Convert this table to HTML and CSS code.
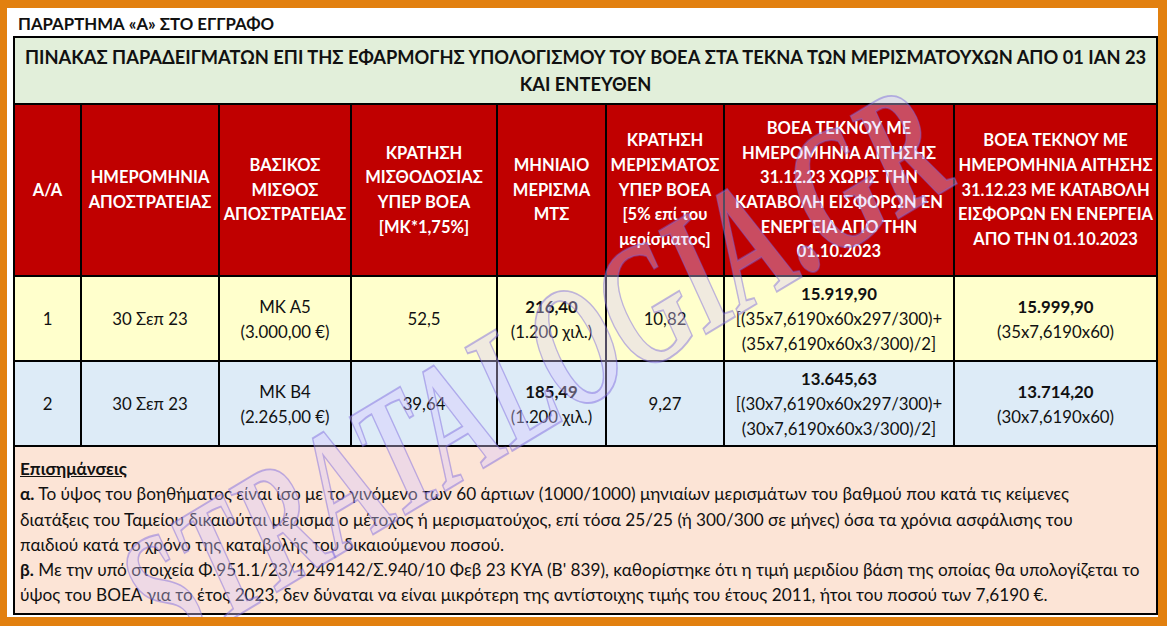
FILE: index.html
```html
<!DOCTYPE html>
<html lang="el">
<head>
<meta charset="utf-8">
<title>ΠΑΡΑΡΤΗΜΑ «Α»</title>
<link rel="stylesheet" href="styles.css">
</head>
<body>
<div class="frame">
  <div class="doc-title">ΠΑΡΑΡΤΗΜΑ «Α» ΣΤΟ ΕΓΓΡΑΦΟ</div>
  <table class="sheet">
    <colgroup>
      <col class="c1"><col class="c2"><col class="c3"><col class="c4"><col class="c5"><col class="c6"><col class="c7"><col class="c8">
    </colgroup>
    <tr class="r-title">
      <td colspan="8">ΠΙΝΑΚΑΣ ΠΑΡΑΔΕΙΓΜΑΤΩΝ ΕΠΙ ΤΗΣ ΕΦΑΡΜΟΓΗΣ ΥΠΟΛΟΓΙΣΜΟΥ ΤΟΥ ΒΟΕΑ ΣΤΑ ΤΕΚΝΑ ΤΩΝ ΜΕΡΙΣΜΑΤΟΥΧΩΝ ΑΠΟ 01 ΙΑΝ 23<br>ΚΑΙ ΕΝΤΕΥΘΕΝ</td>
    </tr>
    <tr class="r-head">
      <th>Α/Α</th>
      <th>ΗΜΕΡΟΜΗΝΙΑ<br>ΑΠΟΣΤΡΑΤΕΙΑΣ</th>
      <th>ΒΑΣΙΚΟΣ<br>ΜΙΣΘΟΣ<br>ΑΠΟΣΤΡΑΤΕΙΑΣ</th>
      <th>ΚΡΑΤΗΣΗ<br>ΜΙΣΘΟΔΟΣΙΑΣ<br>ΥΠΕΡ ΒΟΕΑ<br>[ΜΚ*1,75%]</th>
      <th>ΜΗΝΙΑΙΟ<br>ΜΕΡΙΣΜΑ<br>ΜΤΣ</th>
      <th>ΚΡΑΤΗΣΗ<br>ΜΕΡΙΣΜΑΤΟΣ<br>ΥΠΕΡ ΒΟΕΑ<br>[5% επί του<br>μερίσματος]</th>
      <th>ΒΟΕΑ ΤΕΚΝΟΥ ΜΕ<br>ΗΜΕΡΟΜΗΝΙΑ ΑΙΤΗΣΗΣ<br>31.12.23 ΧΩΡΙΣ ΤΗΝ<br>ΚΑΤΑΒΟΛΗ ΕΙΣΦΟΡΩΝ ΕΝ<br>ΕΝΕΡΓΕΙΑ ΑΠΟ ΤΗΝ<br>01.10.2023</th>
      <th>ΒΟΕΑ ΤΕΚΝΟΥ ΜΕ<br>ΗΜΕΡΟΜΗΝΙΑ ΑΙΤΗΣΗΣ<br>31.12.23 ΜΕ ΚΑΤΑΒΟΛΗ<br>ΕΙΣΦΟΡΩΝ ΕΝ ΕΝΕΡΓΕΙΑ<br>ΑΠΟ ΤΗΝ 01.10.2023</th>
    </tr>
    <tr class="r-data r-yellow">
      <td>1</td>
      <td>30 Σεπ 23</td>
      <td>ΜΚ Α5<br>(3.000,00 €)</td>
      <td>52,5</td>
      <td><b>216,40</b><br>(1.200 χιλ.)</td>
      <td>10,82</td>
      <td><b>15.919,90</b><br>[(35x7,6190x60x297/300)+<br>(35x7,6190x60x3/300)/2]</td>
      <td><b>15.999,90</b><br>(35x7,6190x60)</td>
    </tr>
    <tr class="r-data r-blue">
      <td>2</td>
      <td>30 Σεπ 23</td>
      <td>ΜΚ Β4<br>(2.265,00 €)</td>
      <td>39,64</td>
      <td><b>185,49</b><br>(1.200 χιλ.)</td>
      <td>9,27</td>
      <td><b>13.645,63</b><br>[(30x7,6190x60x297/300)+<br>(30x7,6190x60x3/300)/2]</td>
      <td><b>13.714,20</b><br>(30x7,6190x60)</td>
    </tr>
    <tr class="r-notes">
      <td colspan="8">
        <div class="note-head">Επισημάνσεις</div>
        <div class="note-line"><b>α.</b> Το ύψος του βοηθήματος είναι ίσο με το γινόμενο των 60 άρτιων (1000/1000) μηνιαίων μερισμάτων του βαθμού που κατά τις κείμενες</div>
        <div class="note-line">διατάξεις του Ταμείου δικαιούται μέρισμα ο μέτοχος ή μερισματούχος, επί τόσα 25/25 (ή 300/300 σε μήνες) όσα τα χρόνια ασφάλισης του</div>
        <div class="note-line">παιδιού κατά το χρόνο της καταβολής του δικαιούμενου ποσού.</div>
        <div class="note-line"><b>β.</b> Με την υπό στοιχεία Φ.951.1/23/1249142/Σ.940/10 Φεβ 23 ΚΥΑ (Β' 839), καθορίστηκε ότι η τιμή μεριδίου βάση της οποίας θα υπολογίζεται το</div>
        <div class="note-line">ύψος του ΒΟΕΑ για το έτος 2023, δεν δύναται να είναι μικρότερη της αντίστοιχης τιμής του έτους 2011, ήτοι του ποσού των 7,6190 €.</div>
      </td>
    </tr>
  </table>
  <div class="watermark" aria-hidden="true">STRATALOGIA.GR</div>
</div>
</body>
</html>
```
FILE: styles.css
```css
html, body {
  margin: 0;
  padding: 0;
  background: #ffffff;
}
body {
  font-family: Lato, "Noto Sans", sans-serif;
  color: #111;
}
.frame {
  position: relative;
  box-sizing: border-box;
  width: 1167px;
  height: 626px;
  border-style: solid;
  border-color: #e2800f;
  border-width: 8px 9px 9px 7px;
  padding: 0 3px 0 5px;
  background: #fff;
  overflow: hidden;
}
.doc-title {
  font-weight: 700;
  font-size: 16.8px;
  line-height: 24px;
  padding: 4px 0 0 6px;
  height: 24px;
}
.sheet {
  border-collapse: collapse;
  table-layout: fixed;
  width: 1143px;
  margin-left: 1px;
}
.c1 { width: 67px; }
.c2 { width: 138px; }
.c3 { width: 132px; }
.c4 { width: 146px; }
.c5 { width: 109px; }
.c6 { width: 118px; }
.c7 { width: 230px; }
.c8 { width: 203px; }
.sheet td, .sheet th {
  border: 2px solid #000;
  padding: 0;
  text-align: center;
  vertical-align: middle;
}
.r-title td {
  background: #e2efda;
  height: 65px;
  font-weight: 700;
  font-size: 18.3px;
  line-height: 27px;
}
.r-head th {
  background: #c00000;
  color: #fff;
  height: 170px;
  font-weight: 700;
  font-size: 16.5px;
  line-height: 24.7px;
}
.r-data td {
  height: 83px;
  font-size: 16.8px;
  line-height: 25px;
  color: #111;
}
.r-data b { font-weight: 700; }
.r-yellow td { background: #ffffcc; }
.r-blue td { background: #ddebf7; }
.r-notes td {
  background: #fce4d6;
  text-align: left;
  vertical-align: top;
  height: 153px;
  padding: 9px 4px 4px 5px;
  font-size: 17.2px;
  line-height: 25.3px;
}
.note-head {
  font-weight: 700;
  text-decoration: underline;
}
.note-line {
  white-space: nowrap;
}
.watermark {
  position: absolute;
  left: 527px;
  top: 362px;
  transform: translate(-50%, -50%) rotate(-31deg) scaleX(0.64);
  font-family: "Liberation Serif", serif;
  font-weight: 700;
  font-style: italic;
  font-size: 172px;
  line-height: 1;
  white-space: nowrap;
  color: rgba(215, 200, 255, 0.38);
  -webkit-text-stroke: 2px rgba(120, 100, 220, 0.45);
  pointer-events: none;
}
```
